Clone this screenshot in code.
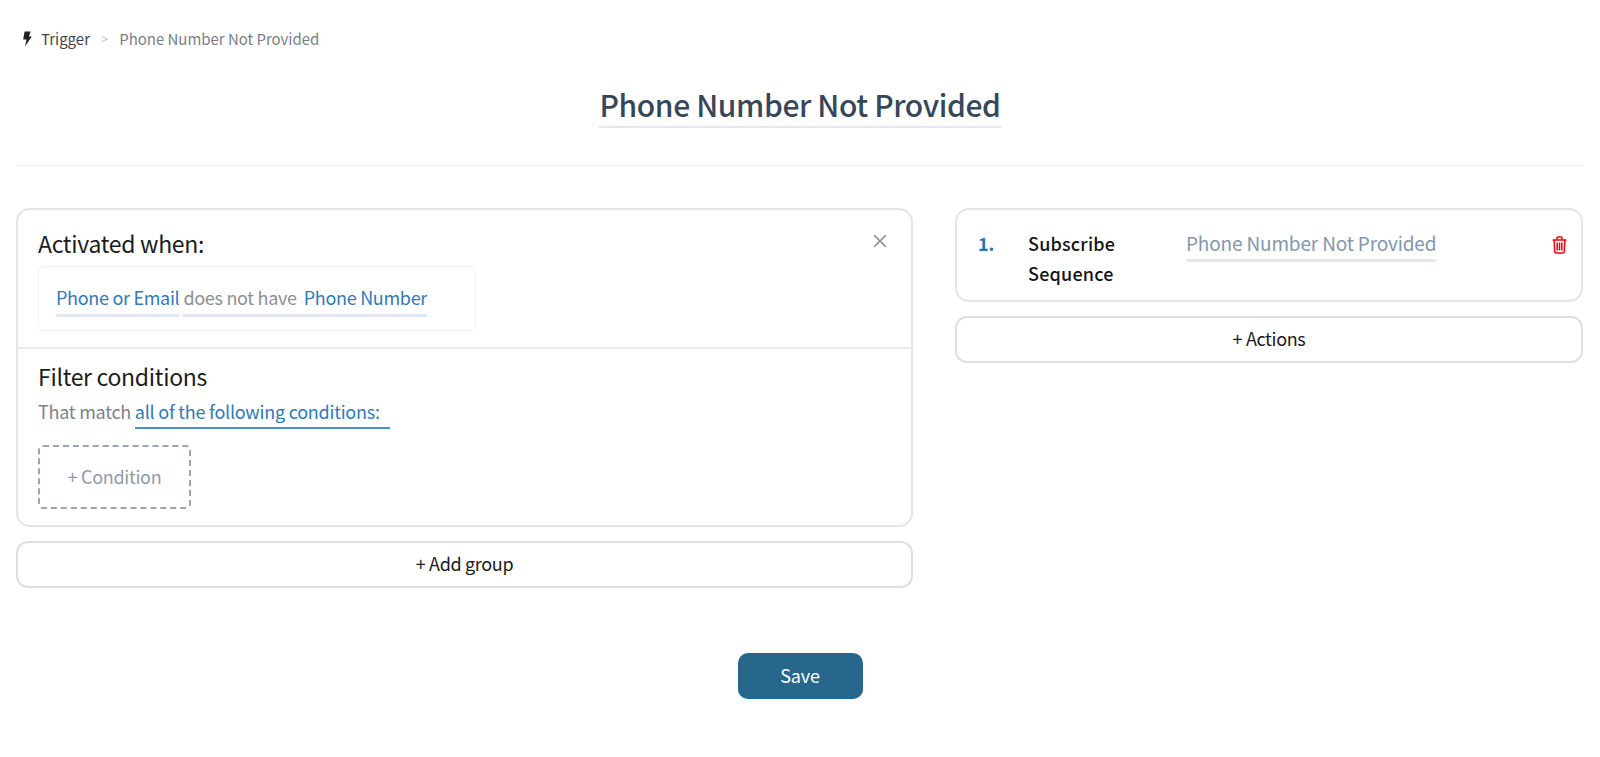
<div class="page">
  <nav class="crumbs">
    <svg class="bolt" viewBox="0 0 10 16" width="10" height="16" aria-hidden="true"><path d="M2.6.5h6L7 5.4h2.8L3 15.6l1.5-7.2H1.2z" fill="#222"/></svg>
    <span class="c-root">Trigger</span>
    <span class="c-sep">&gt;</span>
    <span class="c-cur">Phone Number Not Provided</span>
  </nav>

  <div class="title-wrap"><h1>Phone Number Not Provided</h1></div>
  <div class="rule"></div>

  <div class="columns">
    <section class="col">
      <div class="card">
        <div class="top">
          <h2>Activated when:</h2>
          <button class="close" aria-label="Close">
            <svg viewBox="0 0 14 14" width="14" height="14"><path d="M1.2 1.2l11.6 11.6M12.8 1.2L1.2 12.8" stroke="#8a8a8a" stroke-width="1.6" fill="none"/></svg>
          </button>
          <div class="sentence">
            <span class="tok blue">Phone or Email</span><span class="tok"><span class="grey">does not have</span><span class="blue second">Phone Number</span></span>
          </div>
        </div>
        <div class="bottom">
          <h2>Filter conditions</h2>
          <p class="match">That match <span class="all">all of the following conditions:</span></p>
          <button class="cond">+ Condition</button>
        </div>
      </div>
      <button class="wide">+ Add group</button>
    </section>

    <section class="col">
      <div class="card action">
        <span class="num">1.</span>
        <span class="name">Subscribe Sequence</span>
        <span class="val">Phone Number Not Provided</span>
        <svg class="trash" viewBox="0 0 15 18" width="15" height="18" aria-hidden="true">
          <path d="M.6 3.9h13.8M4.9 3.7V2q0-1.1 1.1-1.1h3q1.1 0 1.1 1.1v1.7M2.2 4l.5 11.6q0 1.5 1.5 1.5h6.6q1.5 0 1.5-1.5L12.8 4M5.2 6.5v8M7.5 6.5v8M9.8 6.5v8" fill="none" stroke="#f0000f" stroke-width="1.5"/>
        </svg>
      </div>
      <button class="wide">+ Actions</button>
    </section>
  </div>

  <div class="save-row"><button class="save">Save</button></div>
</div>

<style>
  :global(body) { margin: 0; background: #fff; }
  .page {
    font-family: "Noto Sans CJK SC", "Noto Sans", sans-serif;
    padding: 0 16px;
    color: #1a1a1a;
    height: 757px;
    box-sizing: border-box;
  }
  .crumbs {
    display: flex;
    align-items: center;
    height: 22px;
    padding: 28px 0 0 6px;
    font-size: 15px;
    line-height: 22px;
  }
  .bolt { margin-right: 9px; }
  .c-root { color: #3f4650; }
  .c-sep { color: #c4c4c4; margin: 0 11px; font-size: 13px; }
  .c-cur { color: #7a7f85; letter-spacing: -.03px; }
  .title-wrap { display: flex; justify-content: center; margin-top: 33px; }
  h1 {
    margin: 0;
    font-size: 30px;
    line-height: 43px;
    font-weight: 500;
    letter-spacing: -.38px;
    color: #36475a;
    border-bottom: 2px solid #e2e8f0;
  }
  .rule { height: 1px; background: #edf0f2; margin-top: 37px; }
  .columns { display: grid; grid-template-columns: 897px 628px; gap: 42px; margin-top: 42px; align-items: start; }
  .col { display: flex; flex-direction: column; gap: 14px; }
  .card { border: 2px solid #e5e5e5; border-radius: 14px; background: #fff; box-sizing: border-box; }
  .top { position: relative; padding: 18px 20px 16px; border-bottom: 2px solid #e8eaec; }
  h2 { margin: 0; font-size: 23px; line-height: 30px; font-weight: 400; letter-spacing: -.3px; color: #1c1c1c; }
  .close { position: absolute; top: 24px; right: 24px; padding: 0; border: 0; background: none; line-height: 0; }
  .sentence {
    margin-top: 8px;
    width: 438px;
    height: 65px;
    box-sizing: border-box;
    border: 1px solid #f0f1f3;
    border-radius: 5px;
    padding: 17px 0 0 17px;
    display: flex;
    gap: 4px;
    font-size: 18px;
    line-height: 27px;
    letter-spacing: -.3px;
  }
  .tok { border-bottom: 3px solid #e2e8f0; height: 30px; white-space: nowrap; }
  .blue { color: #2f7ab8; }
  .grey { color: #8b8f94; }
  .second { margin-left: 7px; }
  .bottom { padding: 12px 20px 16px; }
  .match { margin: 7px 0 0; font-size: 18px; line-height: 27px; color: #7d8287; letter-spacing: -.25px; }
  .all { display: inline-block; width: 255px; color: #2f7ab8; border-bottom: 2px solid #4a90ce; height: 29px; }
  .cond {
    display: block;
    margin-top: 16px;
    width: 153px;
    height: 64px;
    padding: 0 0 2px;
    border: 2px dashed #9aa4b5;
    border-radius: 5px;
    background: #fff;
    color: #8f9bab;
    font: inherit;
    font-size: 18px;
    letter-spacing: -.3px;
  }
  .wide {
    height: 47px;
    padding: 0 0 3px;
    border: 2px solid #dfdfdf;
    border-radius: 12px;
    background: #fff;
    font: inherit;
    font-size: 18px;
    letter-spacing: -.35px;
    color: #1a1a1a;
  }
  .action {
    display: grid;
    grid-template-columns: 50px 158px 1fr 16px;
    align-items: start;
    height: 94px;
    padding: 18px 13px 0 21px;
    font-size: 18px;
    line-height: 30px;
  }
  .num { color: #1f77b4; font-weight: 700; }
  .name { font-weight: 500; width: 100px; color: #141414; letter-spacing: .2px; }
  .val { justify-self: start; font-size: 19px; letter-spacing: -.16px; color: #8497ab; border-bottom: 3px solid #e2e8f0; height: 31px; }
  .trash { margin-top: 8px; }
  .save-row { display: flex; justify-content: center; margin-top: 65px; }
  .save {
    width: 125px;
    height: 46px;
    padding: 0 0 1px;
    border: 0;
    border-bottom: 1px solid #1a6ba0;
    border-radius: 10px;
    background: #27678c;
    color: #fff;
    font: inherit;
    font-size: 18px;
    letter-spacing: -.1px;
  }
</style>
